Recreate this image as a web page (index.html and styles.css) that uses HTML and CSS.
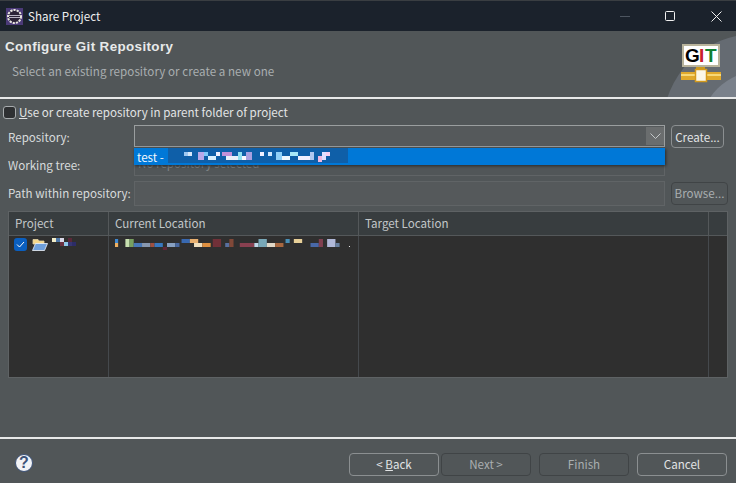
FILE: index.html
```html
<!DOCTYPE html>
<html>
<head>
<meta charset="utf-8">
<title>Share Project</title>
<link rel="stylesheet" href="styles.css">
</head>
<body>
<div class="titlebar">
  <svg class="appicon" width="17" height="17" viewBox="0 0 17 17">
    <rect width="17" height="17" fill="#4b3a78"/>
    <circle cx="8.5" cy="8.5" r="6.5" fill="#2c2338" stroke="#e8e6e0" stroke-width="2" stroke-dasharray="2.2 1"/>
    <path d="M3 7.500h11M3 9.500h11" stroke="#b9b4c4" stroke-width="1"/>
  </svg>
  <span class="wintitle">Share Project</span>
  <div class="wincontrols">
    <svg width="10" height="10" viewBox="0 0 10 10" class="wmin"><path d="M0 5.500h10" stroke="#4d5560"/></svg>
    <svg width="10" height="10" viewBox="0 0 10 10" class="wmax"><rect x=".5" y=".5" width="9" height="9" rx="1" fill="none" stroke="#f0f0f0"/></svg>
    <svg width="11" height="11" viewBox="0 0 11 11" class="wclose"><path d="M.5.5l10 10M10.500.5l-10 10" stroke="#f0f0f0"/></svg>
  </div>
</div>

<div class="banner">
  <div class="bannertext">
    <h1>Configure Git Repository</h1>
    <p>Select an existing repository or create a new one</p>
  </div>
  <svg class="gitlogo" width="74" height="66" viewBox="-8 0 74 66">
    <circle cx="85" cy="95" r="92" fill="#656b72"/>
    <circle cx="90" cy="100" r="60" fill="#7a818b"/>
    <rect x="13" y="14" width="36" height="21" fill="#fff" stroke="#b9b49c" stroke-width="2"/>
    <text x="15" y="31" class="gitg">G</text>
    <text x="29" y="31" class="giti">I</text>
    <text x="35" y="31" class="gitt">T</text>
    <rect x="11" y="41" width="40" height="8" fill="#e0a92c"/>
    <rect x="11" y="43" width="40" height="2" fill="#f7d878"/>
    <rect x="26" y="36" width="9" height="4" fill="#c99a22"/>
    <rect x="25.500" y="38.500" width="11" height="12" fill="#fbf7e8" stroke="#d49a1c" stroke-width="1.500"/>
  </svg>
</div>

<div class="body">
  <label class="checkrow"><span class="check"></span><span><u>U</u>se or create repository in parent folder of project</span></label>

  <div class="form">
    <div class="row row-repo">
      <span class="lbl">Repository:</span>
      <div class="combo">
        <span class="arrow"><svg width="11" height="6" viewBox="0 0 11 6"><path d="M.5.5l5 5 5-5" fill="none" stroke="#c4c8ca"/></svg></span>
      </div>
      <span class="btn btn-create">Create...</span>
    </div>
    <div class="row row-tree">
      <span class="lbl">Working tree:</span>
      <div class="field field-tree">No repository selected</div>
    </div>
    <div class="row row-path">
      <span class="lbl">Path within repository:</span>
      <div class="field field-path"></div>
      <span class="btn btn-off btn-browse">Browse...</span>
    </div>

    <div class="popup">
      <span>test -</span>
      <svg class="blur" width="180" height="17" viewBox="0 0 180 17">
        <rect x="0" y="0" width="180" height="15" fill="#0f5fa8"/>
        <rect x="0" y="15" width="180" height="2" fill="#0078d7"/>
        <rect x="16" y="4" width="4" height="4" fill="#9fc8f0"/><rect x="20" y="4" width="4" height="4" fill="#d8e8fa"/>
        <rect x="30" y="4" width="6" height="8" fill="#b8a8e8"/><rect x="36" y="4" width="4" height="4" fill="#80c8f8"/>
        <rect x="40" y="8" width="8" height="4" fill="#d8f0ff"/><rect x="48" y="4" width="4" height="4" fill="#f0f0ff"/>
        <rect x="54" y="4" width="10" height="4" fill="#c090d8"/><rect x="58" y="8" width="12" height="4" fill="#e8f0fa"/>
        <rect x="70" y="4" width="4" height="8" fill="#90e0f0"/><rect x="74" y="8" width="4" height="4" fill="#f8f8ff"/>
        <rect x="78" y="4" width="6" height="8" fill="#a8a0e0"/>
        <rect x="92" y="4" width="4" height="4" fill="#f0f0ff"/><rect x="100" y="4" width="4" height="4" fill="#d0e8ff"/>
        <rect x="108" y="4" width="6" height="8" fill="#90d0f8"/><rect x="114" y="8" width="8" height="4" fill="#f0f8ff"/>
        <rect x="122" y="4" width="8" height="4" fill="#a8e8f8"/><rect x="130" y="8" width="12" height="4" fill="#f0f0ff"/>
        <rect x="142" y="4" width="4" height="8" fill="#b0c8f0"/><rect x="150" y="8" width="4" height="6" fill="#f0b8e0"/>
        <rect x="154" y="4" width="4" height="8" fill="#e0e0ff"/><rect x="158" y="4" width="4" height="4" fill="#f8d0f0"/>
      </svg>
    </div>
  </div>

  <div class="table">
    <div class="thead">
      <span class="c1">Project</span>
      <span class="c2">Current Location</span>
      <span class="c3">Target Location</span>
      <span class="c4"></span>
    </div>
    <div class="tbody">
      <div class="c1 cell-project">
        <span class="tick"><svg width="9" height="7" viewBox="0 0 9 7"><path d="M1 3.500l2.500 2.500L8 1" fill="none" stroke="#fff"/></svg></span>
        <svg class="folder" width="16" height="12" viewBox="0 0 16 12">
          <path d="M1 .5h5l1 1.500h5v3H1z" fill="#f5d88c" stroke="#e0d0a4" stroke-width=".8"/>
          <path d="M.5 11.500l3-7h12l-3 7z" fill="#6fa0dc" stroke="#f0f4fa" stroke-width=".8"/>
        </svg>
        <svg width="24" height="10" viewBox="0 0 24 10" class="blurname">
          <rect x="0" y="0" width="4" height="4" fill="#f2eeca"/><rect x="4" y="0" width="4" height="4" fill="#4f78a8"/>
          <rect x="8" y="0" width="4" height="4" fill="#d8d8e8"/><rect x="8" y="4" width="4" height="4" fill="#6a3040"/>
          <rect x="12" y="4" width="4" height="4" fill="#8fc8e8"/><rect x="16" y="0" width="4" height="4" fill="#5a2838"/>
          <rect x="20" y="4" width="4" height="4" fill="#2c2c68"/><rect x="16" y="4" width="4" height="4" fill="#363670"/>
        </svg>
      </div>
      <div class="c2 cell-loc">
        <svg width="235" height="14" viewBox="7 0 226 14" preserveAspectRatio="none">
          <rect x="7" y="1" width="3" height="4" fill="#3f88d0"/><rect x="7" y="5" width="3" height="4" fill="#f0b060"/>
          <rect x="17" y="1" width="4" height="8" fill="#c8e0b0"/><rect x="21" y="1" width="4" height="8" fill="#78a060"/>
          <rect x="25" y="5" width="8" height="4" fill="#4878b8"/><rect x="33" y="5" width="8" height="4" fill="#8898b0"/>
          <rect x="41" y="5" width="4" height="4" fill="#a05040"/><rect x="45" y="5" width="8" height="4" fill="#3878c0"/>
          <rect x="53" y="9" width="4" height="3" fill="#602838"/><rect x="57" y="5" width="8" height="4" fill="#88a0c0"/>
          <rect x="65" y="5" width="4" height="4" fill="#4868a0"/><rect x="71" y="1" width="8" height="4" fill="#3868b0"/>
          <rect x="79" y="1" width="8" height="4" fill="#e8b070"/><rect x="83" y="5" width="8" height="4" fill="#f0e0c0"/>
          <rect x="91" y="5" width="8" height="4" fill="#e09040"/><rect x="101" y="1" width="8" height="8" fill="#703038"/>
          <rect x="113" y="5" width="4" height="4" fill="#5870a0"/><rect x="117" y="1" width="4" height="8" fill="#804838"/>
          <rect x="127" y="5" width="14" height="4" fill="#884050"/><rect x="141" y="5" width="4" height="4" fill="#c0d8e8"/>
          <rect x="145" y="1" width="8" height="8" fill="#78a8b8"/><rect x="153" y="5" width="8" height="4" fill="#e0d8c8"/>
          <rect x="161" y="5" width="8" height="4" fill="#a86840"/><rect x="171" y="1" width="4" height="4" fill="#4890b8"/>
          <rect x="179" y="1" width="8" height="4" fill="#e8d098"/><rect x="195" y="5" width="8" height="4" fill="#4868a8"/>
          <rect x="203" y="1" width="4" height="8" fill="#804050"/><rect x="211" y="1" width="8" height="8" fill="#b0b8d8"/>
          <rect x="219" y="5" width="4" height="4" fill="#6880a0"/><rect x="232" y="8" width="1" height="1" fill="#e8e8e8"/>
        </svg>
      </div>
      <div class="c3"></div>
      <div class="c4"></div>
    </div>
  </div>
</div>

<div class="footer">
  <span class="help">?</span>
  <div class="buttons">
    <span class="btn btn-wide"><span>&lt; <u>B</u>ack</span></span>
    <span class="btn btn-wide btn-off btn-next">Next &gt;</span>
    <span class="btn btn-wide btn-off btn-finish">Finish</span>
    <span class="btn btn-wide btn-cancel">Cancel</span>
  </div>
</div>
</body>
</html>
```
FILE: styles.css
```css
html, body {
	margin: 0;
	padding: 0;
}

body {
	width: 736px;
	height: 483px;
	overflow: hidden;
	background: #515658;
	color: #e2e4e5;
	font-family: "Noto Sans CJK KR", "Noto Sans", sans-serif;
	font-size: 11.6px;
	line-height: 16px;
}

.titlebar {
	height: 30px;
	background: #1b222c;
	border-top: 1px solid #3a3e42;
	display: flex;
	align-items: center;
	padding-left: 6px;
}

.appicon {
	margin-right: 5px;
}

.wintitle {
	color: #f0f0f0;
}

.wincontrols {
	margin-left: auto;
	display: flex;
	align-items: center;
}

.wmin {
	margin-right: 35px;
}

.wmax {
	margin-right: 36px;
}

.wclose {
	margin-right: 14px;
}

.banner {
	height: 66px;
	display: flex;
	justify-content: space-between;
	border-bottom: 2px solid #e8e9e9;
}

.bannertext h1 {
	margin: 7px 0 0 5px;
	font-family: "Liberation Sans", sans-serif;
	font-size: 13.4px;
	letter-spacing: .38px;
	line-height: 18px;
	font-weight: bold;
	color: #e8eaea;
}

.bannertext p {
	margin: 7px 0 0 12px;
	color: #a9aeb0;
	letter-spacing: .05px;
}

.gitlogo {
	display: block;
}

.gitg, .giti, .gitt {
	font-family: "Liberation Sans", sans-serif;
	font-size: 19px;
	font-weight: bold;
}

.gitg {
	fill: #000;
}

.giti {
	fill: #c8202c;
}

.gitt {
	fill: #108030;
}

.body {
	height: 338px;
	position: relative;
}

.checkrow {
	display: flex;
	align-items: center;
	padding: 5px 0 0 3px;
	height: 16px;
}

.check {
	width: 11px;
	height: 11px;
	border: 1px solid #a8acae;
	border-radius: 3px;
	background: #2e3032;
	margin-right: 3px;
}

.form {
	position: relative;
	margin-top: 4px;
}

.row {
	display: flex;
	align-items: center;
	padding-left: 8px;
}

.row-repo {
	height: 24px;
}

.row-repo .lbl {
	padding-top: 2px;
}

.row-tree {
	height: 28px;
	align-items: flex-start;
}

.row-tree .lbl {
	padding-top: 9px;
}

.row-path {
	height: 25px;
	margin-top: 5px;
}

.row-path .lbl {
	padding-bottom: 2px;
}

.lbl {
	width: 126px;
	flex: none;
	white-space: nowrap;
	color: #d8dbdc;
}

.combo {
	width: 529px;
	height: 20px;
	border: 1px solid #9a9e9f;
	background: #55595b;
	display: flex;
	justify-content: flex-end;
}

.arrow {
	width: 18px;
	background: #6a6d6e;
	margin: 1px 0;
	display: flex;
	align-items: center;
	justify-content: center;
}

.field {
	width: 529px;
	border: 1px solid #606466;
	background: #515658;
	color: #7f8486;
}

.field-tree {
	height: 24px;
	margin-top: 2px;
	line-height: 25px;
	overflow: hidden;
	text-indent: 3px;
}

.field-path {
	height: 23px;
	background: #55595b;
}

.btn {
	display: flex;
	align-items: center;
	justify-content: center;
	box-sizing: border-box;
	height: 23px;
	border: 1px solid #8b8f91;
	border-radius: 4px;
	color: #e2e4e5;
	white-space: nowrap;
}

.btn-off {
	border-color: #404446;
	color: #a9aeb0;
}

.btn-create {
	width: 53px;
	margin: 1px 0 0 6px;
}

.btn-browse {
	width: 57px;
	margin-left: 6px;
	padding-bottom: 2px;
}

.popup {
	position: absolute;
	left: 134px;
	top: 24px;
	width: 531px;
	height: 17px;
	background: #0078d7;
	color: #f4f8fc;
	box-shadow: 1px 1px 3px #26292b;
	display: flex;
	align-items: center;
	padding-left: 3px;
	box-sizing: border-box;
}

.blur {
	margin-left: 4px;
}

.table {
	margin: 5px 0 0 8px;
	width: 720px;
	height: 167px;
	box-sizing: border-box;
	border: 1px solid #5e6264;
	background: #2f2f2f;
	display: flex;
	flex-direction: column;
}

.thead {
	height: 23px;
	background: #383d3f;
	border-bottom: 1px solid #54585a;
	display: flex;
	color: #c3c7c9;
	line-height: 22px;
	flex: none;
}

.tbody {
	flex: 1;
	display: flex;
}

.c1, .c2, .c3 {
	box-sizing: border-box;
	padding-left: 6px;
	border-right: 1px solid #54585a;
	flex: none;
}

.c1 {
	width: 100px;
}

.c2 {
	width: 250px;
}

.c3 {
	width: 350px;
}

.c4 {
	flex: 1;
}

.tbody .c1,
.tbody .c2,
.tbody .c3 {
	border-right-color: #45494d;
}

.cell-project {
	display: flex;
	align-items: flex-start;
	padding-top: 2px;
	padding-left: 5px;
}

.tick {
	width: 13px;
	height: 13px;
	background: #0a5fc0;
	border-radius: 3px;
	display: flex;
	align-items: center;
	justify-content: center;
	margin-right: 5px;
	flex: none;
}

.folder {
	margin: 1px 4px 0 0;
	flex: none;
}

.blurname {
	flex: none;
}

.cell-loc {
	padding-top: 2px;
}

.cell-loc svg {
	display: block;
}

.footer {
	height: 46px;
	border-top: 2px solid #e8e9e9;
	display: flex;
	align-items: flex-start;
	justify-content: space-between;
	box-sizing: border-box;
	padding: 14px 9px 0 15px;
}

.help {
	width: 18px;
	height: 18px;
	margin-top: 1px;
	border-radius: 50%;
	background: #f2f3f6;
	border: 1px solid #3d5379;
	box-sizing: border-box;
	color: #3d5379;
	font-weight: bold;
	font-size: 16px;
	line-height: 16px;
	text-align: center;
	font-family: "Liberation Sans", sans-serif;
}

.buttons {
	display: flex;
}

.btn-wide {
	width: 90px;
	padding-bottom: 2px;
}

.btn-next {
	margin-left: 2px;
}

.btn-finish {
	margin-left: 8px;
}

.btn-cancel {
	margin-left: 8px;
}
```
